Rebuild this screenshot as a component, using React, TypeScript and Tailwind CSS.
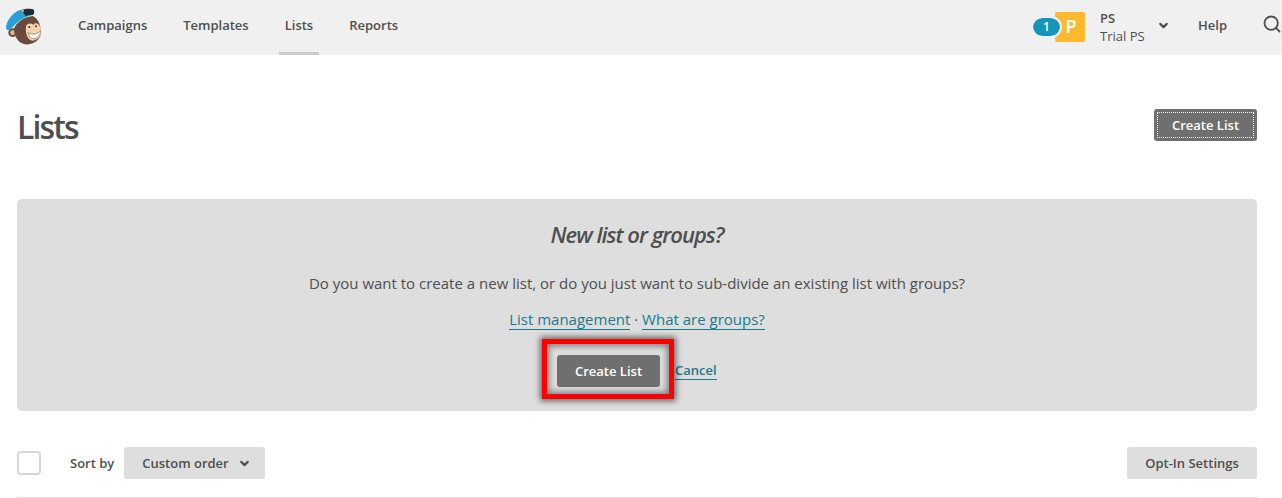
import React from 'react';
import { ChevronDown, Search } from 'lucide-react';

const navItems = ['Campaigns', 'Templates', 'Lists', 'Reports'];

function Logo() {
  return (
    <svg width="38" height="40" viewBox="15 24 114 120" className="shrink-0">
      <circle cx="38" cy="98" r="13" fill="#6b4a3e" />
      <circle cx="38" cy="98" r="7" fill="#e9bd90" />
      <path d="M42 85 C50 65 75 50 98 48 C115 55 125 80 122 105 C115 125 95 135 75 133 C55 130 42 110 42 85 Z" fill="#6b4a3e" />
      <path d="M18 85 C18 65 36 38 60 30 L100 28 C104 34 103 42 98 45 C75 50 50 65 35 85 C28 92 20 92 18 85 Z" fill="#2a9fd6" />
      <path d="M62 31 C75 25 92 24 102 30 C104 36 102 42 98 45 C90 44 82 46 76 48 C74 42 69 36 62 31 Z" fill="#1f2d38" />
      <circle cx="68" cy="33" r="3.500" fill="#e8c94a" />
      <path d="M78 78 C85 68 95 70 100 75 C105 65 118 70 122 85 C128 100 120 118 100 122 C85 122 75 105 78 78 Z" fill="#f3d3ab" />
      <circle cx="88" cy="81" r="3" fill="#3f2a22" />
      <circle cx="108" cy="79" r="3" fill="#3f2a22" />
      <path d="M85 98 C95 105 110 105 122 92 C122 105 110 118 98 116 C90 114 86 106 85 98 Z" fill="#fff" stroke="#5a3b30" strokeWidth="1.500" />
    </svg>
  );
}

function PrimaryButton({ focused }: { focused?: boolean }) {
  return (
    <button className="relative flex h-8 w-[103px] items-center justify-center rounded-[3px] bg-[#6f6f6f] pt-[2px] text-[13px] font-semibold text-white">
      {focused && <span className="absolute inset-[3px] border border-dotted border-white" />}
      Create List
    </button>
  );
}

export default function App() {
  return (
    <div className="h-[498px] w-[1282px] overflow-hidden bg-white font-['Open_Sans',sans-serif] text-[#4f4f4f]">
      <header className="flex h-[55px] items-center bg-[#f0f0f0]">
        <div className="ml-[5px]">
          <Logo />
        </div>
        <nav className="ml-[29px] flex h-full items-stretch gap-[24px]">
          {navItems.map((item) => (
            <a
              key={item}
              className={`flex items-center border-b-[3px] px-[6px] text-[13px] font-semibold ${
                item === 'Lists' ? 'border-[#cccccc]' : 'border-transparent'
              }`}
            >
              {item}
            </a>
          ))}
        </nav>
        <div className="ml-auto flex items-center">
          <div className="mb-[2px] mr-[15px] flex">
            <span className="z-10 mr-[-5px] mt-[6px] flex h-[18px] w-[27px] items-center justify-center rounded-full bg-[#1396b8] text-[12px] font-semibold text-white outline-2 outline-[#f0f0f0]">
              1
            </span>
            <span className="flex h-[30px] w-[30px] items-center justify-center rounded-[2px] bg-[#ffb92f] pl-[2px] text-[18px] font-semibold text-white">
              P
            </span>
          </div>
          <div className="mb-[2px] w-[58px] text-[13px] leading-[18px]">
            <div className="font-semibold">PS</div>
            <div>Trial PS</div>
          </div>
          <ChevronDown size={13} strokeWidth={4} className="mb-[5px] ml-[-1px]" />
          <span className="mb-[3px] ml-[28px] text-[13px] font-semibold">Help</span>
          <Search size={20} strokeWidth={2.2} className="mb-[7px] ml-[35px] shrink-0" />
        </div>
      </header>

      <main className="pl-[17px] pr-[25px]">
        <div className="flex h-[144px] items-start justify-between pt-[54px]">
          <h1 className="mt-[-4px] text-[32px] font-semibold leading-[44px] tracking-[-1.9px]">Lists</h1>
          <PrimaryButton focused />
        </div>

        <section className="flex h-[212px] flex-col items-center rounded-[5px] bg-[#dedede] pt-[19px]">
          <h2 className="text-[22px] font-semibold italic leading-[32px] tracking-[-1px]">New list or groups?</h2>
          <p className="mt-[23px] text-[15px] leading-[20px]">
            Do you want to create a new list, or do you just want to sub-divide an existing list with groups?
          </p>
          <p className="mt-[16px] text-[15px] leading-[20px]">
            <a className="border-b border-[#1a7a8f] text-[#1a7a8f]">List management</a>
            {' · '}
            <a className="border-b border-[#1a7a8f] text-[#1a7a8f]">What are groups?</a>
          </p>
          <div className="mt-[26px] flex items-center self-start pl-[540px]">
            <div className="relative">
              <PrimaryButton />
              <span className="absolute bottom-[-12px] left-[-15px] right-[-14px] top-[-16px] border-[5px] border-[#fb0000] shadow-[0_0_6px_2px_rgba(0,0,0,0.55),inset_0_0_6px_2px_rgba(0,0,0,0.45)]" />
            </div>
            <a className="ml-[15px] border-b border-[#1a7a8f] text-[13px] font-semibold leading-[17px] text-[#1a7a8f]">
              Cancel
            </a>
          </div>
        </section>

        <div className="mt-[36px] flex items-center">
          <span className="h-6 w-6 rounded-[4px] border-2 border-[#d6d6d6] bg-white" />
          <span className="ml-[29px] pt-[2px] text-[13px] font-semibold">Sort by</span>
          <button className="ml-[10px] flex h-8 w-[141px] items-center rounded-[3px] bg-[#dedede] pl-[18px] text-[13px] font-semibold">
            <span className="pt-[2px]">Custom order</span>
            <ChevronDown size={13} strokeWidth={4} className="ml-[9px]" />
          </button>
          <button className="ml-auto h-8 w-[130px] rounded-[3px] bg-[#dedede] pt-[2px] text-[13px] font-semibold">
            Opt-In Settings
          </button>
        </div>
        <div className="mt-[18px] border-t border-[#e0e0e0]" />
      </main>
    </div>
  );
}
